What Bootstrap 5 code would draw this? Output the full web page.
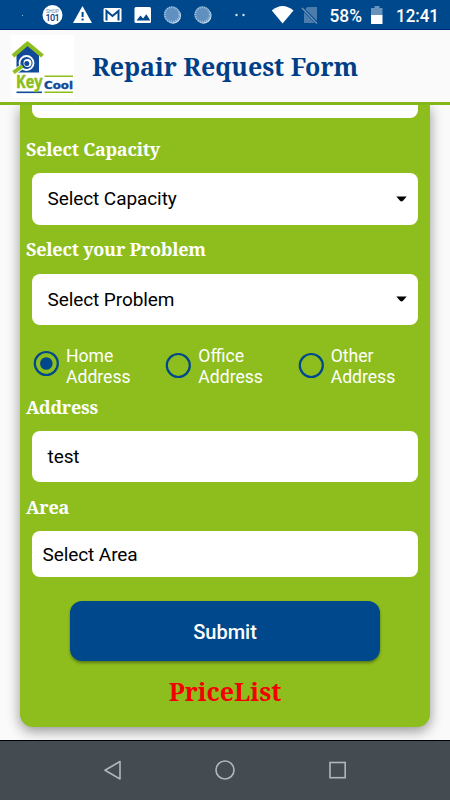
<!DOCTYPE html>
<html lang="en">
<head>
<meta charset="utf-8">
<meta name="viewport" content="width=device-width, initial-scale=1">
<title>Repair Request Form</title>
<link href="https://cdn.jsdelivr.net/npm/bootstrap@5.3.0/dist/css/bootstrap.min.css" rel="stylesheet">
<style>
  :root { --brand-blue: #00488c; --brand-green: #8dbe1e; }
  body { height: 800px; font-family: Roboto, sans-serif; background: #fafafa; color: #000; }
  .serif-title { font-family: "Noto Serif", "DejaVu Serif", serif; font-weight: 700; white-space: nowrap; }
  .status-bar { height: 30px; background: var(--brand-blue); border-bottom: 1px solid #002a78; }
  .app-header { height: 75px; padding-left: 11px; background: #fafafa; border-bottom: 3px solid #84b71a; }
  .page-title { color: #003f87; font-size: 25px; letter-spacing: -.06px; line-height: 30px; margin: 0 0 0 18px; }
  .form-area { height: 635px; padding: 0 20px; }
  .form-panel { height: 622px; background: var(--brand-green); border-radius: 0 0 13px 13px; box-shadow: 0 4px 13px rgba(0,0,0,.42); }
  .field-label { color: #fff; font-size: 18px; letter-spacing: -.24px; line-height: 24px; height: 49px; padding: 12px 0 0 6px; margin: 0; }
  .field-label.first { height: 55px; padding-top: 19px; }
  .field-label.near { height: 38.5px; padding-top: 2.5px; }
  .field-label.area-label { padding-top: 13px; }
  .field { height: 51.5px; margin: 0 12px; padding: 1px 11px 0 15.5px; background: #fff; border-radius: 8px; font-size: 19px; letter-spacing: -.08px; }
  .field.cut { height: 13px; border-radius: 0 0 8px 8px; }
  .field.area { height: 46px; padding: 2px 11px 0 10.5px; }
  .choices { height: 67px; padding: 21px 0 0 13px; color: #fff; font-size: 17.6px; line-height: 20.5px; }
  .choice { width: 132.5px; gap: 7px; }
  .submit-btn, .submit-btn:hover { width: 310px; height: 60px; margin-top: 24px; padding-top: 8px; background: var(--brand-blue); color: #fff; border: 0; border-radius: 12px; font-size: 20px; font-weight: 500; box-shadow: 0 2px 3px rgba(0,0,0,.35); }
  .price-link { color: #f40000; font-size: 25px; line-height: 30px; margin-top: 14.5px; }
  .nav-keys { height: 60px; background: #454c51; border-top: 1px solid #000; }
</style>
<script src="https://cdn.jsdelivr.net/npm/bootstrap@5.3.0/dist/js/bootstrap.bundle.min.js"></script>
</head>
<body class="d-flex flex-column overflow-hidden">
<div class="status-bar flex-shrink-0">
  <svg class="d-block" width="450" height="29" viewBox="0 0 450 29" font-family="Roboto, sans-serif" fill="#fff">
    <circle cx="22.5" cy="15.5" r=".6" opacity=".7"/>
    <circle cx="52.5" cy="15" r="10"/>
    <text x="52.5" y="13" font-size="5" text-anchor="middle" textLength="13" fill="#5c83b4">SHOP</text>
    <text x="52.5" y="20.500" font-size="9" font-weight="500" text-anchor="middle" textLength="14" fill="#073b7d">101</text>
    <path d="M82.5 6 92 23H73Z"/><path d="M81.6 12h2v5h-2zm0 6.6h2v2h-2z" fill="#00488c"/>
    <rect x="103.5" y="8" width="18" height="14" rx="1.5"/>
    <path d="M106.5 20.500V11l6 5 6-5v9.500" fill="none" stroke="#00488c" stroke-width="2"/>
    <rect x="134.500" y="7" width="16.500" height="16" rx="1.500"/><path d="m136.500 20.500 4-5 2.600 3 3.200-4.300 4 6.300Z" fill="#00488c"/>
    <g id="spin"><circle cx="173" cy="15.700" r="8" fill="#c9e0ef"/><circle cx="172" cy="14.500" r="8.200" fill="#5f90c0"/><circle cx="172" cy="14.500" r="7.200" fill="none" stroke="#a9c7e0" stroke-width="1.600" stroke-dasharray="1 1.200"/></g>
    <use href="#spin" x="30.500"/>
    <circle cx="236.500" cy="15" r="1.200" opacity=".85"/><circle cx="243.500" cy="15" r="1.200" opacity=".85"/>
    <path d="M271.800 10.500Q282.500 1.500 293.500 10.500L282.600 23.500Z"/>
    <path d="M307.500 7h9.500v16h-13V10.500Z" fill="#4b7cac"/><path d="m301.500 7.500 16 16" stroke="#00488c" stroke-width="3"/><path d="m302 8 15 15.500" stroke="#6a94bd" stroke-width="1.300"/>
    <text x="329.500" y="21.700" font-size="17.500" font-weight="500" textLength="32.500" lengthAdjust="spacingAndGlyphs">58%</text>
    <path d="M371 8h3.500V6h5v2h3v7H371Z" fill="#6692bc"/><path d="M371 15h11.500v9H371Z"/>
    <text x="396" y="21.700" font-size="18" font-weight="500" textLength="43" lengthAdjust="spacingAndGlyphs">12:41</text>
  </svg>
</div>
<header class="app-header d-flex align-items-center flex-shrink-0">
  <svg width="63" height="63" viewBox="0 0 63 63" role="img" aria-label="KeyCool">
    <path d="M0 0h63v63H0z" fill="#fff"/>
    <path d="M5.500 20 16.500 10 28 20v17.500H5.500Z" fill="#114a98"/>
    <path d="M2 21 16.500 8.500 31.500 21" fill="none" stroke="#8dbe1e" stroke-width="4.200" stroke-linejoin="round"/>
    <circle cx="15.500" cy="28" r="7" fill="#114a98" stroke="#fff" stroke-width="1.800"/><circle cx="16.500" cy="28" r="4" fill="#fff"/><circle cx="15.800" cy="28.500" r="2.500" fill="#114a98"/>
    <path d="M10.500 32 2.500 37.500" stroke="#fff" stroke-width="5.500"/><path d="M11.500 31 2.500 37.500" stroke="#8dbe1e" stroke-width="4"/>
    <path d="M33.500 41.300H62M33.500 57.300H62" stroke="#8dbe1e" stroke-width="1.400"/><path d="M5.500 57.300H31" stroke="#114a98" stroke-width="1.600"/>
    <text x="5" y="53" font-family="Open Sans, sans-serif" font-weight="700" font-size="18" fill="#8dbe1e" stroke="#8dbe1e" stroke-width=".5" textLength="26.500" lengthAdjust="spacingAndGlyphs">Key</text>
    <text x="33" y="54.300" font-family="DejaVu Sans, sans-serif" font-weight="700" font-size="11" fill="#114a98" stroke="#114a98" stroke-width=".4" textLength="29" lengthAdjust="spacingAndGlyphs">Cool</text>
  </svg>
  <h1 class="serif-title page-title">Repair Request Form</h1>
</header>
<main class="form-area flex-shrink-0 overflow-hidden">
  <form class="form-panel">
    <div class="field cut"></div>
    <p class="serif-title field-label first">Select Capacity</p>
    <div class="field d-flex align-items-center justify-content-between">Select Capacity
      <svg width="11" height="7" viewBox="0 0 11 7"><path d="M.3.500h10.400L7 4.800Q5.500 6.400 4 4.800Z"/></svg></div>
    <p class="serif-title field-label">Select your Problem</p>
    <div class="field d-flex align-items-center justify-content-between">Select Problem
      <svg width="11" height="7" viewBox="0 0 11 7"><path d="M.3.500h10.400L7 4.800Q5.500 6.400 4 4.800Z"/></svg></div>
    <div class="choices d-flex">
      <div class="choice d-flex"><svg class="flex-shrink-0" width="26" height="36" viewBox="0 0 26 36"><circle cx="13.300" cy="17.500" r="11.500" fill="none" stroke="#00488c" stroke-width="2.200"/><circle cx="13.300" cy="17.500" r="6.300" fill="#00488c"/></svg><span>Home<br>Address</span></div>
      <div class="choice d-flex"><svg class="flex-shrink-0" width="26" height="36" viewBox="0 0 26 36"><circle cx="13.300" cy="19.500" r="11.500" fill="none" stroke="#00488c" stroke-width="2.200"/></svg><span>Office<br>Address</span></div>
      <div class="choice d-flex"><svg class="flex-shrink-0" width="26" height="36" viewBox="0 0 26 36"><circle cx="13.300" cy="19.500" r="11.500" fill="none" stroke="#00488c" stroke-width="2.200"/></svg><span>Other<br>Address</span></div>
    </div>
    <p class="serif-title field-label near">Address</p>
    <div class="field d-flex align-items-center">test</div>
    <p class="serif-title field-label area-label">Area</p>
    <div class="field area d-flex align-items-center">Select Area</div>
    <button type="button" class="btn submit-btn d-block mx-auto">Submit</button>
    <div class="serif-title price-link text-center">PriceList</div>
  </form>
</main>
<footer class="nav-keys flex-shrink-0">
  <svg class="d-block" width="450" height="59" viewBox="0 0 450 59" fill="none" stroke="#b2b6b8" stroke-width="1.600">
    <path d="M120 20.500v17.500l-15-8.800Z" stroke-linejoin="round"/><circle cx="225" cy="29" r="9"/><rect x="330" y="21.500" width="15.200" height="15.200"/>
  </svg>
</footer>
</body>
</html>
